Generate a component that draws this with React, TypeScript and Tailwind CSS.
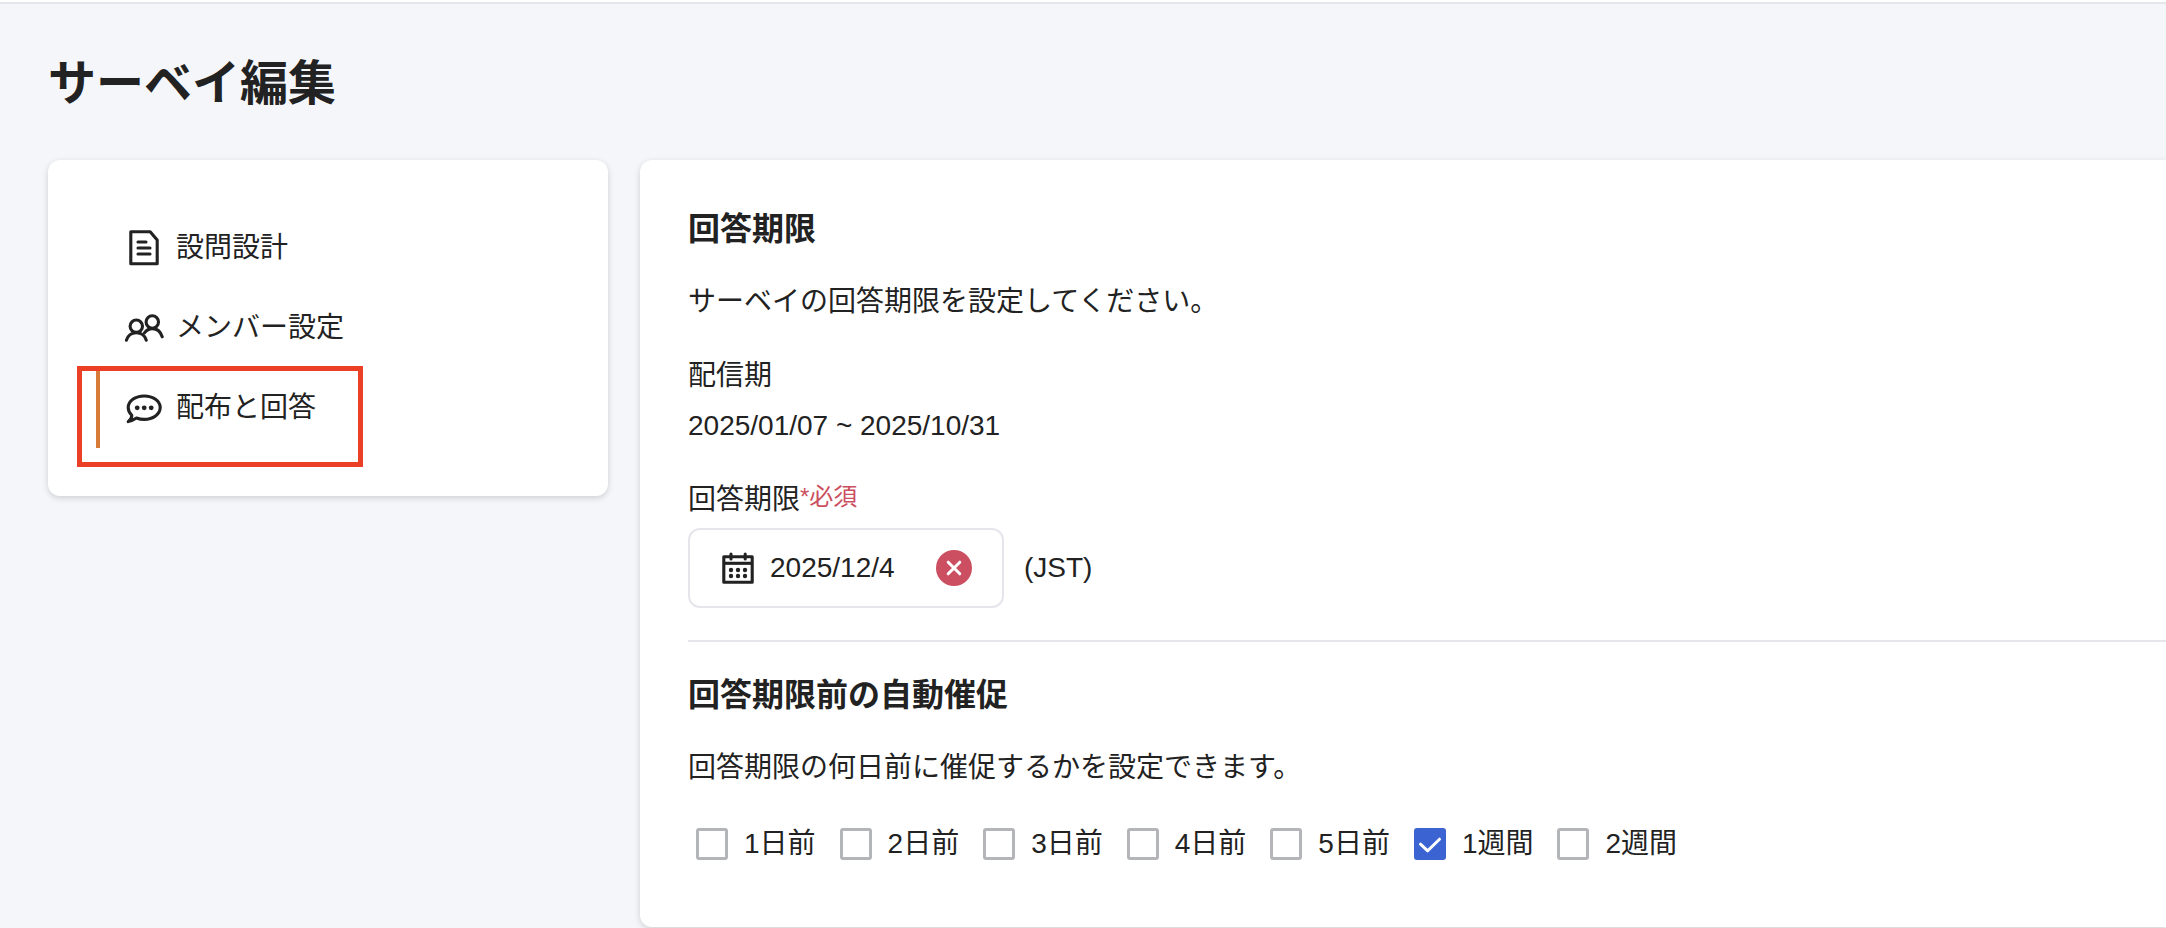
import { useState } from 'react';
import clsx from 'clsx';

const DocumentIcon = () => (
  <svg viewBox="0 0 40 40" className="size-10 shrink-0" fill="none" stroke="currentColor" strokeWidth="3.1" strokeLinecap="round" strokeLinejoin="round" aria-hidden="true">
    <path d="M6.8 3.7H26.2L33.2 12V35.8H6.8Z" />
    <path d="M14 14H22M14 20H26M14 26H26" />
  </svg>
);

const MembersIcon = () => (
  <svg viewBox="0 0 40 40" className="size-10 shrink-0" fill="none" stroke="currentColor" strokeWidth="3.1" strokeLinecap="round" aria-hidden="true">
    <circle cx="12.3" cy="18.2" r="6.2" />
    <circle cx="28.3" cy="14" r="6.2" />
    <path d="M2.4 32.2C4 27.2 8 24.7 12.3 24.7S20.8 27.2 22.3 32.2" />
    <path d="M20.5 24.8C22.5 22 25.2 20.6 28.3 20.6C33 20.6 36.6 23.6 38.2 28.8" />
  </svg>
);

const BubbleIcon = () => (
  <svg viewBox="0 0 40 40" className="size-10 shrink-0" fill="none" stroke="currentColor" strokeWidth="3.1" strokeLinecap="round" strokeLinejoin="round" aria-hidden="true">
    <path d="M7.8 27.4C5.5 25.3 4.2 22.6 4.2 19.6C4.2 13 11.3 8 20.2 8S36.2 13 36.2 19.6S29.1 31.4 20.2 31.4C17.4 31.4 14.8 30.9 12.5 30C9.5 32 7 33 4.2 33.6C6.5 31.6 7.8 29.8 7.8 27.4Z" />
    <g fill="currentColor" stroke="none">
      <circle cx="13.2" cy="19.8" r="2.4" />
      <circle cx="20.2" cy="19.8" r="2.4" />
      <circle cx="27.2" cy="19.8" r="2.4" />
    </g>
  </svg>
);

const CalendarIcon = () => (
  <svg viewBox="0 0 32 32" className="size-8 shrink-0" fill="none" stroke="currentColor" strokeWidth="3.1" strokeLinejoin="round" aria-hidden="true">
    <path d="M1.8 4.8H30.2V30.2H1.8Z" />
    <path d="M1.8 11.3H30.2" />
    <path d="M9 2V7M23.2 2V7" strokeLinecap="round" />
    <g fill="currentColor" stroke="none">
      <circle cx="9" cy="18" r="2.2" />
      <circle cx="16" cy="18" r="2.2" />
      <circle cx="23" cy="18" r="2.2" />
      <circle cx="9" cy="24" r="2.2" />
      <circle cx="16" cy="24" r="2.2" />
      <circle cx="23" cy="24" r="2.2" />
    </g>
  </svg>
);

const menuItems = [
  { label: '設問設計', icon: <DocumentIcon />, active: false },
  { label: 'メンバー設定', icon: <MembersIcon />, active: false },
  { label: '配布と回答', icon: <BubbleIcon />, active: true },
];

const reminders = ['1日前', '2日前', '3日前', '4日前', '5日前', '1週間', '2週間'];

export default function App() {
  const [deadline, setDeadline] = useState('2025/12/4');
  const [checked, setChecked] = useState(['1週間']);

  const toggle = (label: string) =>
    setChecked((prev) => (prev.includes(label) ? prev.filter((l) => l !== label) : [...prev, label]));

  return (
    <div className="min-h-screen overflow-x-hidden bg-[#f5f6fa] font-['Liberation_Sans','Noto_Sans_CJK_JP',sans-serif] text-[28px] leading-[42px] text-[#222222]">
      <header className="h-1 border-b-2 border-[#e5e6eb] bg-white" />
      <h1 className="px-12 pt-12 pb-11 text-5xl leading-[64px] font-bold">サーベイ編集</h1>

      <div className="flex items-start gap-8 pl-12">
        <nav className="w-[560px] shrink-0 rounded-xl bg-white p-12 shadow-[0_2px_6px_rgba(0,0,0,0.16)]">
          <ul>
            {menuItems.map((item) => (
              <li key={item.label} className="relative">
                <a
                  href="#"
                  className={clsx(
                    'flex h-20 items-center gap-3 border-l-4 pl-6',
                    item.active ? 'border-[#d97b38]' : 'border-transparent'
                  )}
                >
                  {item.icon}
                  {item.label}
                </a>
                {item.active && (
                  <span className="pointer-events-none absolute -top-0.5 -left-[19px] h-[101px] w-[286px] border-5 border-[#eb4025]" />
                )}
              </li>
            ))}
          </ul>
        </nav>

        <main className="min-w-0 flex-1 rounded-l-xl bg-white pt-12 pb-[62px] pl-12 shadow-[0_2px_6px_rgba(0,0,0,0.16)]">
          <section>
            <h2 className="text-[32px] font-bold">回答期限</h2>
            <p className="mt-[31px]">サーベイの回答期限を設定してください。</p>
            <dl className="mt-8">
              <dt>配信期</dt>
              <dd className="mt-2">2025/01/07 ~ 2025/10/31</dd>
            </dl>
            <div className="mt-8 flex">
              <label htmlFor="deadline">回答期限</label>
              <span className="text-2xl leading-9 text-[#cb4f60]">*必須</span>
            </div>
            <div className="mt-[7px] flex items-center gap-5">
              <div className="flex h-20 w-[316px] items-center rounded-xl border-2 border-[#e5e6eb] pr-[30px] pl-8">
                <CalendarIcon />
                <input
                  id="deadline"
                  type="text"
                  value={deadline}
                  onChange={(e) => setDeadline(e.target.value)}
                  className="ml-4 h-10 min-w-0 flex-1 bg-transparent outline-none"
                />
                <button
                  type="button"
                  aria-label="クリア"
                  onClick={() => setDeadline('')}
                  className="size-9 shrink-0 rounded-full bg-[#cb4f60] text-white"
                >
                  <svg viewBox="0 0 36 36" className="size-9" stroke="currentColor" strokeWidth="3" strokeLinecap="round" aria-hidden="true">
                    <path d="M12.2 12.2L23.8 23.8M23.8 12.2L12.2 23.8" />
                  </svg>
                </button>
              </div>
              <span>(JST)</span>
            </div>
          </section>

          <section className="mt-8 border-t-2 border-[#e5e6eb] pt-8">
            <h2 className="text-[32px] font-bold">回答期限前の自動催促</h2>
            <p className="mt-[31px]">回答期限の何日前に催促するかを設定できます。</p>
            <div className="mt-[34px] flex flex-wrap gap-6 pl-2">
              {reminders.map((label) => (
                <label key={label} className="flex items-center gap-4">
                  <span className="relative size-8">
                    <input
                      type="checkbox"
                      checked={checked.includes(label)}
                      onChange={() => toggle(label)}
                      className="block size-8 appearance-none rounded-[3px] border-3 border-[#b4b5b9] bg-white checked:border-[#3b63d2] checked:bg-[#3b63d2]"
                    />
                    {checked.includes(label) && (
                      <svg viewBox="0 0 32 32" className="pointer-events-none absolute inset-0 size-8 text-white" fill="none" stroke="currentColor" strokeWidth="3" strokeLinecap="round" strokeLinejoin="round" aria-hidden="true">
                        <path d="M6.5 16.2L13.7 22.8L25.5 11.2" />
                      </svg>
                    )}
                  </span>
                  {label}
                </label>
              ))}
            </div>
          </section>
        </main>
      </div>
    </div>
  );
}
